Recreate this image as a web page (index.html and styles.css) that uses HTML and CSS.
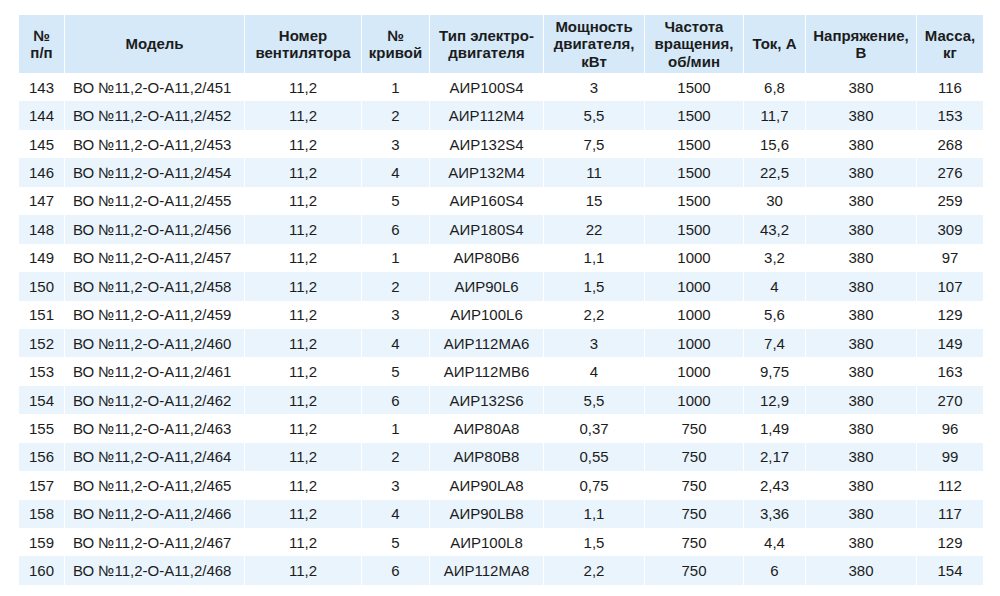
FILE: index.html
```html
<!DOCTYPE html>
<html lang="ru">
<head>
<meta charset="utf-8">
<link rel="stylesheet" href="styles.css">
</head>
<body>
<table class="spec">
<colgroup>
<col class="c1"><col class="c2"><col class="c3"><col class="c4"><col class="c5"><col class="c6"><col class="c7"><col class="c8"><col class="c9"><col class="c10">
</colgroup>
<thead>
<tr>
<th>№<br>п/п</th>
<th>Модель</th>
<th>Номер<br>вентилятора</th>
<th>№<br>кривой</th>
<th>Тип электро-<br>двигателя</th>
<th>Мощность<br>двигателя,<br>кВт</th>
<th>Частота<br>вращения,<br>об/мин</th>
<th>Ток, А</th>
<th>Напряжение,<br>В</th>
<th>Масса,<br>кг</th>
</tr>
</thead>
<tbody>
<tr><td>143</td><td class="model">ВО №11,2-О-А11,2/451</td><td>11,2</td><td>1</td><td>АИР100S4</td><td>3</td><td>1500</td><td>6,8</td><td>380</td><td>116</td></tr>
<tr><td>144</td><td class="model">ВО №11,2-О-А11,2/452</td><td>11,2</td><td>2</td><td>АИР112М4</td><td>5,5</td><td>1500</td><td>11,7</td><td>380</td><td>153</td></tr>
<tr><td>145</td><td class="model">ВО №11,2-О-А11,2/453</td><td>11,2</td><td>3</td><td>АИР132S4</td><td>7,5</td><td>1500</td><td>15,6</td><td>380</td><td>268</td></tr>
<tr><td>146</td><td class="model">ВО №11,2-О-А11,2/454</td><td>11,2</td><td>4</td><td>АИР132М4</td><td>11</td><td>1500</td><td>22,5</td><td>380</td><td>276</td></tr>
<tr><td>147</td><td class="model">ВО №11,2-О-А11,2/455</td><td>11,2</td><td>5</td><td>АИР160S4</td><td>15</td><td>1500</td><td>30</td><td>380</td><td>259</td></tr>
<tr><td>148</td><td class="model">ВО №11,2-О-А11,2/456</td><td>11,2</td><td>6</td><td>АИР180S4</td><td>22</td><td>1500</td><td>43,2</td><td>380</td><td>309</td></tr>
<tr><td>149</td><td class="model">ВО №11,2-О-А11,2/457</td><td>11,2</td><td>1</td><td>АИР80В6</td><td>1,1</td><td>1000</td><td>3,2</td><td>380</td><td>97</td></tr>
<tr><td>150</td><td class="model">ВО №11,2-О-А11,2/458</td><td>11,2</td><td>2</td><td>АИР90L6</td><td>1,5</td><td>1000</td><td>4</td><td>380</td><td>107</td></tr>
<tr><td>151</td><td class="model">ВО №11,2-О-А11,2/459</td><td>11,2</td><td>3</td><td>АИР100L6</td><td>2,2</td><td>1000</td><td>5,6</td><td>380</td><td>129</td></tr>
<tr><td>152</td><td class="model">ВО №11,2-О-А11,2/460</td><td>11,2</td><td>4</td><td>АИР112МА6</td><td>3</td><td>1000</td><td>7,4</td><td>380</td><td>149</td></tr>
<tr><td>153</td><td class="model">ВО №11,2-О-А11,2/461</td><td>11,2</td><td>5</td><td>АИР112МВ6</td><td>4</td><td>1000</td><td>9,75</td><td>380</td><td>163</td></tr>
<tr><td>154</td><td class="model">ВО №11,2-О-А11,2/462</td><td>11,2</td><td>6</td><td>АИР132S6</td><td>5,5</td><td>1000</td><td>12,9</td><td>380</td><td>270</td></tr>
<tr><td>155</td><td class="model">ВО №11,2-О-А11,2/463</td><td>11,2</td><td>1</td><td>АИР80А8</td><td>0,37</td><td>750</td><td>1,49</td><td>380</td><td>96</td></tr>
<tr><td>156</td><td class="model">ВО №11,2-О-А11,2/464</td><td>11,2</td><td>2</td><td>АИР80В8</td><td>0,55</td><td>750</td><td>2,17</td><td>380</td><td>99</td></tr>
<tr><td>157</td><td class="model">ВО №11,2-О-А11,2/465</td><td>11,2</td><td>3</td><td>АИР90LA8</td><td>0,75</td><td>750</td><td>2,43</td><td>380</td><td>112</td></tr>
<tr><td>158</td><td class="model">ВО №11,2-О-А11,2/466</td><td>11,2</td><td>4</td><td>АИР90LB8</td><td>1,1</td><td>750</td><td>3,36</td><td>380</td><td>117</td></tr>
<tr><td>159</td><td class="model">ВО №11,2-О-А11,2/467</td><td>11,2</td><td>5</td><td>АИР100L8</td><td>1,5</td><td>750</td><td>4,4</td><td>380</td><td>129</td></tr>
<tr><td>160</td><td class="model">ВО №11,2-О-А11,2/468</td><td>11,2</td><td>6</td><td>АИР112МА8</td><td>2,2</td><td>750</td><td>6</td><td>380</td><td>154</td></tr>
</tbody>
</table>
</body>
</html>
```

FILE: styles.css
```css
html, body {
  margin: 0;
  padding: 0;
  background: #ffffff;
}
body {
  padding: 15px 0 0 18px;
  font-family: "Liberation Sans", Arial, sans-serif;
  color: #1c1c1c;
}
.spec {
  width: 965px;
  border-collapse: collapse;
  table-layout: fixed;
  font-size: 15px;
}
.c1 { width: 46px; }
.c2 { width: 180px; }
.c3 { width: 117px; }
.c4 { width: 68px; }
.c5 { width: 114px; }
.c6 { width: 101px; }
.c7 { width: 99px; }
.c8 { width: 62px; }
.c9 { width: 111px; }
.c10 { width: 67px; }
.spec th,
.spec td {
  padding: 0;
  border-left: 1px solid #ffffff;
  border-right: 1px solid #ffffff;
  text-align: center;
  vertical-align: middle;
  white-space: nowrap;
}
.spec th {
  height: 58px;
  background: #d5e9f8;
  font-weight: bold;
  line-height: 17.5px;
}
.spec td {
  height: 28.44px;
  line-height: 17px;
}
.spec td.model {
  text-align: left;
  padding-left: 8px;
}
.spec tbody tr:nth-child(even) td {
  background: #e9f4fd;
}
```
